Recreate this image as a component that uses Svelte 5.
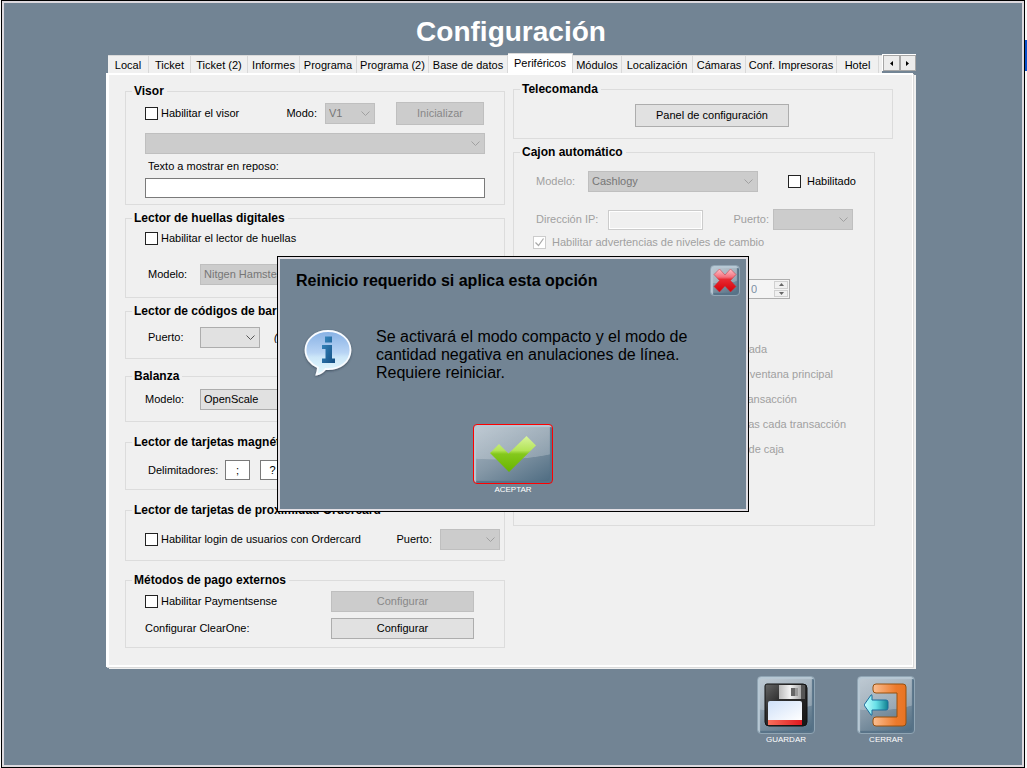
<script>
  const tabs = [
    'Local', 'Ticket', 'Ticket (2)', 'Informes', 'Programa', 'Programa (2)', 'Base de datos',
    'Periféricos', 'Módulos', 'Localización', 'Cámaras', 'Conf. Impresoras', 'Hotel'
  ];
  let active = $state('Periféricos');

  const drawerOptions = [
    { text: 'Abrir entrada', width: 215 },
    { text: 'Ver ventana principal', width: 281 },
    { text: 'Por transacción', width: 245 },
    { text: 'Tras cada transacción', width: 294 },
    { text: 'Cierre de caja', width: 232 }
  ];
</script>

<div class="screen">
  <div class="window">
    <h1>Configuración</h1>

    <main>
      <div class="tabbar">
        <div class="tabs" role="tablist">
          {#each tabs as tab}
            <button class="tab" class:active={tab === active} role="tab" aria-selected={tab === active} onclick={() => (active = tab)}>{tab}</button>
          {/each}
          <span class="tab stub"></span>
        </div>
        <div class="scroller">
          <button aria-label="Anterior"><svg width="3" height="5" viewBox="0 0 3 5"><path d="M3 0v5L0 2.500z" /></svg></button>
          <button aria-label="Siguiente"><svg width="3" height="5" viewBox="0 0 3 5"><path d="M0 0v5L3 2.500z" /></svg></button>
        </div>
      </div>

      <div class="panel">
        <div class="col left">
          <fieldset class="visor">
            <legend>Visor</legend>
            <div class="row">
              <label class="check"><input type="checkbox" />Habilitar el visor</label>
              <label class="push" for="modo">Modo:</label>
              <select id="modo" class="w50" disabled><option>V1</option></select>
              <button class="btn init" disabled>Inicializar</button>
            </div>
            <select class="full" aria-label="Visor" disabled><option></option></select>
            <label class="caption" for="reposo">Texto a mostrar en reposo:</label>
            <input id="reposo" class="text" type="text" />
          </fieldset>

          <fieldset class="huellas">
            <legend>Lector de huellas digitales</legend>
            <label class="check"><input type="checkbox" />Habilitar el lector de huellas</label>
            <div class="field">
              <label class="in" for="lector">Modelo:</label>
              <select id="lector" disabled><option>Nitgen Hamster</option></select>
            </div>
          </fieldset>

          <fieldset class="codigos">
            <legend>Lector de códigos de barras</legend>
            <div class="field">
              <label class="in" for="pcod">Puerto:</label>
              <div class="row wide">
                <select id="pcod" class="w60"><option></option></select>
                <em>(puerto serie)</em>
              </div>
            </div>
          </fieldset>

          <fieldset class="balanza">
            <legend>Balanza</legend>
            <div class="field">
              <label for="balanza">Modelo:</label>
              <select id="balanza"><option>OpenScale</option></select>
            </div>
          </fieldset>

          <fieldset class="magneticas">
            <legend>Lector de tarjetas magnéticas</legend>
            <div class="row delim">
              <label class="in" for="ini">Delimitadores:</label>
              <input id="ini" class="text mini" type="text" value=";" />
              <input class="text mini" type="text" value="?" aria-label="Delimitador final" />
            </div>
          </fieldset>

          <fieldset class="proximidad">
            <legend>Lector de tarjetas de proximidad Ordercard</legend>
            <div class="row">
              <label class="check"><input type="checkbox" />Habilitar login de usuarios con Ordercard</label>
              <label class="push" for="pord">Puerto:</label>
              <select id="pord" class="w60" disabled><option></option></select>
            </div>
          </fieldset>

          <fieldset class="pago">
            <legend>Métodos de pago externos</legend>
            <div class="row">
              <label class="check"><input type="checkbox" />Habilitar Paymentsense</label>
              <button class="btn conf" disabled>Configurar</button>
            </div>
            <div class="row">
              <span>Configurar ClearOne:</span>
              <button class="btn conf">Configurar</button>
            </div>
          </fieldset>
        </div>

        <div class="col right">
          <fieldset class="tele">
            <legend>Telecomanda</legend>
            <button class="btn">Panel de configuración</button>
          </fieldset>

          <fieldset class="cajon">
            <legend>Cajon automático</legend>
            <div class="row one">
              <label class="dim" for="cmod">Modelo:</label>
              <select id="cmod" class="w170" disabled><option>Cashlogy</option></select>
              <label class="check roomy"><input type="checkbox" />Habilitado</label>
            </div>
            <div class="row two">
              <label class="dim" for="ip">Dirección IP:</label>
              <input id="ip" class="text" type="text" disabled />
              <label class="dim push" for="cpuerto">Puerto:</label>
              <select id="cpuerto" class="w80" disabled><option></option></select>
            </div>
            <label class="check roomy dim"><input type="checkbox" checked disabled />Habilitar advertencias de niveles de cambio</label>
            <div class="spin">
              <input type="text" value="0" aria-label="Nivel" disabled />
              <span class="arrows">
                <button aria-label="Subir" disabled><svg width="5" height="3" viewBox="0 0 5 3"><path d="M0 3h5L2.500 0z" /></svg></button>
                <button aria-label="Bajar" disabled><svg width="5" height="3" viewBox="0 0 5 3"><path d="M0 0h5L2.500 3z" /></svg></button>
              </span>
            </div>
            <div class="options">
              {#each drawerOptions as option}
                <label class="check roomy dim"><input type="checkbox" disabled /><span style="width: {option.width}px">{option.text}</span></label>
              {/each}
            </div>
          </fieldset>
        </div>
      </div>

      <footer>
        <button class="tool">
          <span class="tile">
            <svg width="44" height="44" viewBox="0 0 44 44">
              <defs>
                <linearGradient id="fd" x1="0" x2="1" y1="0" y2="1"><stop offset="0" stop-color="#666" /><stop offset=".35" stop-color="#303030" /><stop offset="1" stop-color="#151515" /></linearGradient>
                <linearGradient id="fm" x1="0" x2="1"><stop offset="0" stop-color="#bbb" /><stop offset=".5" stop-color="#f3f3f3" /><stop offset="1" stop-color="#aaa" /></linearGradient>
                <linearGradient id="fl" x1="0" x2="1" y1="0" y2="1"><stop offset="0" stop-color="#cfe0f8" /><stop offset="1" stop-color="#fff" /></linearGradient>
                <linearGradient id="fr" x1="0" x2="1"><stop offset="0" stop-color="#f8705c" /><stop offset="1" stop-color="#e01820" /></linearGradient>
              </defs>
              <path d="M3 1h36q4 0 4 4v34q0 4-4 4H5q-4 0-4-4V3q0-2 2-2z" fill="url(#fd)" stroke="#111" />
              <path d="M15 2h22v14H15z" fill="url(#fm)" />
              <path d="M37 2h4v14h-4z" fill="#555" />
              <path d="M27 5h4v8h-4z" fill="#666" /><path d="M31 5h3v8h-3z" fill="#999" />
              <path d="M6 18h30q2 0 2 2v17H4V20q0-2 2-2z" fill="url(#fl)" />
              <path d="M4 37h34v5H4z" fill="url(#fr)" />
            </svg>
          </span>
          GUARDAR
        </button>
        <button class="tool">
          <span class="tile">
            <svg width="44" height="44" viewBox="0 0 44 44">
              <defs>
                <linearGradient id="eo" x1="0" x2="1"><stop offset="0" stop-color="#fbbf92" /><stop offset=".7" stop-color="#ec7a2c" /><stop offset="1" stop-color="#e87424" /></linearGradient>
                <linearGradient id="ea" x1="0" x2="1"><stop offset="0" stop-color="#c8ffff" /><stop offset=".5" stop-color="#68e0e8" /><stop offset="1" stop-color="#108090" /></linearGradient>
              </defs>
              <path d="M12 1h27q3 0 3 3v36q0 3-3 3H12q-3 0-3-3v-3q0-3 3-3h21V10H12q-3 0-3-3V4q0-3 3-3z" fill="url(#eo)" stroke="#96500f" />
              <path d="M0 22l7-10q1-1 1 1v4h14q2 0 2 2v6q0 2-2 2H8v4q0 2-1 1z" fill="url(#ea)" stroke="#1d6c9c" />
            </svg>
          </span>
          CERRAR
        </button>
      </footer>
    </main>
  </div>

  <div class="overlay">
    <div class="dialog" role="dialog" aria-labelledby="dlg-title">
      <header>
        <h2 id="dlg-title">Reinicio requerido si aplica esta opción</h2>
        <button class="tile close" aria-label="Cancelar">
          <svg width="24" height="25" viewBox="0 0 24 25">
            <defs><linearGradient id="cx" x1="0" x2="0" y1="0" y2="1"><stop offset="0" stop-color="#ffc4cc" /><stop offset=".35" stop-color="#f4707c" /><stop offset=".45" stop-color="#e82a32" /><stop offset="1" stop-color="#d40008" /></linearGradient></defs>
            <path d="M1 6.500L6.500 1l5.500 6 5.500-6L23 6.500l-5.500 6L23 18.500 17.500 24 12 18l-5.500 6L1 18.500l5.500-6z" fill="url(#cx)" stroke="#c8303c" stroke-width=".5" />
          </svg>
        </button>
      </header>
      <div class="message">
        <svg width="52" height="52" viewBox="0 0 52 52">
          <defs>
            <linearGradient id="ib" x1="0" x2="0" y1="0" y2="1"><stop offset="0" stop-color="#86b0e4" /><stop offset=".5" stop-color="#b8d4f4" /><stop offset=".6" stop-color="#cce6f8" /><stop offset="1" stop-color="#e4fbff" /></linearGradient>
            <linearGradient id="ii" x1="0" x2="1" y1="0" y2="1"><stop offset="0" stop-color="#3a8cc4" /><stop offset="1" stop-color="#124c80" /></linearGradient>
            <filter id="sh" x="-20%" y="-20%" width="140%" height="140%"><feDropShadow dx="0" dy="1" stdDeviation="1.300" flood-color="#26384a" flood-opacity=".7" /></filter>
          </defs>
          <path d="M26 3C13 3 3.500 11.500 3.500 22c0 8 5.500 14.500 12.500 17.500-.3 3.500-1 5.500-1.500 7 4-.5 7-3 9-5.500C38 42 48.500 33.500 48.500 22 48.500 11.500 39 3 26 3z" fill="url(#ib)" stroke="#f8fbff" stroke-width="1.800" filter="url(#sh)" />
          <path d="M23 8.500h7v6h-7zM20 17h10v13.500h3V35H20v-4.500h3.500V21H20z" fill="url(#ii)" />
        </svg>
        <p>Se activará el modo compacto y el modo de cantidad negativa en anulaciones de línea. Requiere reiniciar.</p>
      </div>
      <button class="tool accept">
        <span class="tile">
          <svg width="48" height="38" viewBox="0 0 48 38">
            <defs><linearGradient id="ck" x1="0" x2="0" y1="0" y2="1"><stop offset="0" stop-color="#d8f49c" /><stop offset=".4" stop-color="#b4e458" /><stop offset=".5" stop-color="#84c81c" /><stop offset="1" stop-color="#68b400" /></linearGradient></defs>
            <path d="M1 18l9-9 9.500 9.500L37.500 1l9.500 9.500L20 37z" fill="url(#ck)" />
          </svg>
        </span>
        ACEPTAR
      </button>
    </div>
  </div>
</div>

<style>
  :global(body) {
    margin: 0;
    background: linear-gradient(#0a50c8, #0a50c8) right 40px / 2px 31px no-repeat, #f8f8f8;
  }
  .screen, .screen * { box-sizing: border-box; }
  .screen {
    padding: 0 2px 0 1px;
    color: #000;
    font: 11px/15px "Liberation Sans", Arial, sans-serif;
  }
  button, input, select { font: inherit; color: inherit; margin: 0; }
  .window {
    min-height: 100vh;
    background: #728494;
    border: 1px solid #000;
    box-shadow: inset 0 0 0 2px #dcd9de;
    padding: 14px 108px 20px 104px;
  }
  h1 { margin: 0; font-size: 28px; line-height: 34px; color: #fff; text-align: center; }
  main { display: flex; flex-direction: column; padding-top: 4px; }

  .tabbar { display: flex; align-items: flex-end; height: 20px; padding-left: 2px; }
  .tabs {
    flex: 1;
    display: grid;
    grid-template-columns: 41fr 42fr 57fr 52fr 57fr 72fr 79fr 65fr 49fr 71fr 53fr 91fr 42fr 3fr;
    align-items: end;
  }
  .tab {
    height: 18px;
    padding: 1px 0 0;
    border: 0;
    border-top: 1px solid #d9d9d9;
    border-right: 1px solid #d9d9d9;
    background: #f0f0f0;
    line-height: 16px;
    white-space: nowrap;
    text-align: center;
  }
  .tab.active { height: 20px; background: #fff; padding-bottom: 2px; }
  .stub { border-right: 0; }
  .scroller { display: flex; width: 34px; height: 17px; margin-bottom: 2px; background: #fff; border-top: 1px solid #fff; border-left: 1px solid #fff; }
  .scroller button { flex: 1; padding: 0; border: 1px solid #a6a6a6; background: #ececec; display: grid; place-items: center; }
  .scroller svg { fill: #000; }

  .panel {
    display: flex;
    align-items: flex-start;
    gap: 8px;
    padding: 7px 19px 17px 16px;
    background: #f0f0f0;
    border: solid #fff;
    border-width: 2px 1px 2px 3px;
    box-shadow: 1px 1px #d9d9d9, 3px 2px #f0f0f0;
    margin: 0 3px 2px 0;
  }
  .col { display: flex; flex-direction: column; }
  .left { flex: 0 0 380px; padding-top: 2px; }
  .right { flex: 1; gap: 6px; }

  fieldset { --inset: 19px; min-width: 0; margin: 0; border: 1px solid #dcdcdc; display: flex; flex-direction: column; padding: 0 19px 0 var(--inset); }
  legend { margin-left: calc(6px - var(--inset)); padding: 0 3px 0 2px; font-size: 12px; font-weight: 700; line-height: 15px; white-space: nowrap; }

  .visor { padding-top: 3px; padding-bottom: 6px; }
  .huellas { margin-top: 6px; padding-top: 6px; padding-bottom: 12px; gap: 19px; }
  .codigos { margin-top: 6px; padding-top: 8px; padding-bottom: 10px; }
  .balanza { margin-top: 10px; padding-top: 5px; padding-bottom: 11px; }
  .magneticas { margin-top: 13px; padding-top: 10px; padding-bottom: 9px; }
  .proximidad { margin-top: 13px; padding: 11px 4px 10px 19px; }
  .pago { margin-top: 12px; padding: 3px 30px 8px 19px; gap: 6px; }

  .row { display: flex; align-items: center; }
  .push { margin-left: auto; margin-right: 8px; }
  .check { display: flex; align-items: center; gap: 3px; height: 13px; white-space: nowrap; }
  .roomy { gap: 6px; }
  .dim { color: #a0a0a0; }
  .in { padding-left: 3px; }
  .caption { padding: 5px 3px 4px; }
  .visor .full { margin-top: 8px; width: 100%; }

  input[type='checkbox'] { appearance: none; flex: none; width: 13px; height: 13px; border: 1px solid #222; background: #fff; }
  input[type='checkbox']:disabled { border-color: #ccc; }
  input[type='checkbox']:checked {
    background: #fff url("data:image/svg+xml,%3Csvg xmlns='http://www.w3.org/2000/svg' viewBox='0 0 11 11'%3E%3Cpath d='M1.500 5.500l3 3 5-7' fill='none' stroke='%23a8a8a8' stroke-width='1.200'/%3E%3C/svg%3E") center / 11px no-repeat;
  }
  select {
    appearance: none;
    height: 21px;
    padding: 0 16px 0 3px;
    border: 1px solid #adadad;
    border-radius: 0;
    background: #e1e1e1 url("data:image/svg+xml,%3Csvg xmlns='http://www.w3.org/2000/svg' viewBox='0 0 9 5'%3E%3Cpath d='M.5 .5l4 4 4-4' fill='none' stroke='%23555'/%3E%3C/svg%3E") right 4px center / 9px 5px no-repeat;
  }
  select:disabled {
    border-color: #bfbfbf;
    color: #767676;
    opacity: 1;
    background: #ccc url("data:image/svg+xml,%3Csvg xmlns='http://www.w3.org/2000/svg' viewBox='0 0 9 5'%3E%3Cpath d='M.5 .5l4 4 4-4' fill='none' stroke='%23a0a0a0'/%3E%3C/svg%3E") right 4px center / 9px 5px no-repeat;
  }
  .w50 { width: 50px; }
  .w60 { width: 60px; }
  .w80 { width: 80px; }
  .w170 { width: 170px; }
  .text { height: 20px; padding: 0 3px; border: 1px solid #7a7a7a; background: #fff; }
  .text:disabled { border-color: #ccc; background: #f0f0f0; box-shadow: inset 0 0 0 1px #fff; }
  .mini { width: 25px; text-align: center; margin-right: 10px; }
  .btn { height: 21px; padding: 0; border: 1px solid #adadad; background: #e1e1e1; }
  .btn:disabled { border-color: #bfbfbf; background: #ccc; color: #888; }
  .init { width: 88px; height: 23px; margin: 0 1px 0 21px; }
  .conf { width: 143px; margin-left: auto; }
  .field { display: grid; grid-template-columns: 55px 1fr; align-items: center; }
  .wide { gap: 14px; }
  .delim label { width: 80px; }

  .tele { --inset: 121px; padding: 7px 103px 11px var(--inset); }
  .tele .btn { height: 23px; }
  .cajon { margin-right: 18px; padding: 11px 14px 69px var(--inset); }
  .one .dim { width: 52px; }
  .one { padding-left: 3px; }
  .one .check { margin-left: 30px; }
  .two { margin: 17px 0 6px; padding: 0 7px 0 3px; }
  .two > .dim:first-child { width: 72px; white-space: nowrap; }
  .two .text { width: 95px; }
  .two .push { margin-right: 4px; }
  .spin { display: flex; width: 84px; height: 20px; margin: 30px 0 0 173px; padding: 1px; border: 1px solid #adadad; background: #f4f4f4; }
  .spin input { flex: 1; min-width: 0; padding: 0 17px 0 0; border: 0; background: none; text-align: right; color: #7d8fa5; }
  .arrows { display: flex; flex-direction: column; gap: 1px; width: 14px; }
  .arrows button { flex: 1; padding: 0; border: 1px solid #d0d0d0; background: #f0f0f0; display: grid; place-items: center; }
  .arrows svg { fill: #666; }
  .options { display: flex; flex-direction: column; gap: 12px; margin-top: 44px; }
  .options span { text-align: right; }

  footer { display: flex; justify-content: flex-end; gap: 42px; padding: 7px 1px 0 0; }
  .tool { display: flex; flex-direction: column; align-items: center; padding: 0; border: 0; background: none; color: #fff; font-size: 8px; line-height: 11px; }
  .tile {
    display: grid;
    place-items: center;
    width: 58px;
    height: 58px;
    border: 1px solid #90a5b4;
    border-radius: 4px;
    background: radial-gradient(ellipse 130% 60% at 30% 0, #ffffff38 98%, #fff0 100%), linear-gradient(150deg, #aebcc8, #8497a6 50%, #4c6a80);
    box-shadow: inset 2px 2px 1px #b7c8d4, inset -2px -2px 1px #587388;
  }

  .overlay { position: fixed; inset: 0 1px 0 0; display: grid; place-items: center; }
  .dialog {
    width: 472px;
    padding: 8px 8px 16px;
    border: 1px solid #000;
    background: #728494;
    box-shadow: inset 0 0 0 2px #e2dfe4;
  }
  header { display: flex; justify-content: space-between; align-items: center; padding-left: 10px; }
  h2 { margin: 0; font-size: 16px; line-height: 18px; }
  .close { width: 30px; height: 31px; padding: 0; }
  .message { display: flex; align-items: flex-start; gap: 22px; padding: 32px 50px 0 16px; min-height: 128px; }
  .message svg { flex: none; }
  p { margin: 0; font-size: 16px; line-height: 18px; }
  .accept { margin: 0 auto; }
  .accept .tile { width: 80px; height: 60px; border-color: #f00; }
</style>
